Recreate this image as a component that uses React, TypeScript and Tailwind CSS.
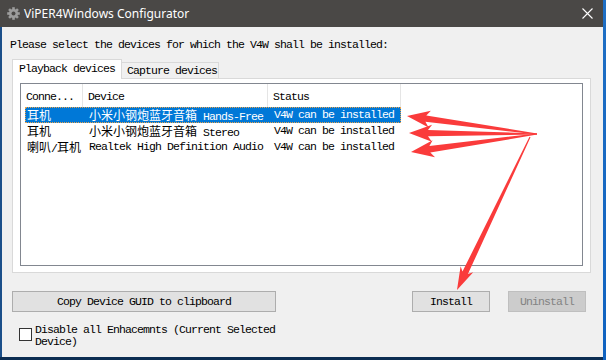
import React from "react";

const mono =
  "font-['Liberation_Mono','Noto_Sans_CJK_SC',monospace] text-[11.5px] tracking-[-0.9px] text-black";
const cjk = "font-['Noto_Sans_CJK_SC',sans-serif] text-[12px] tracking-normal";

type Pt = [number, number];

function arrowPoints(S: Pt, T: Pt, headLen = 19, headHalf = 8.5, shaftHalf = 3.2): string {
  const dx = T[0] - S[0];
  const dy = T[1] - S[1];
  const L = Math.hypot(dx, dy);
  const d: Pt = [dx / L, dy / L];
  const n: Pt = [-d[1], d[0]];
  const B: Pt = [T[0] - d[0] * headLen, T[1] - d[1] * headLen];
  const p = (base: Pt, nn: number, dd: number): Pt => [
    base[0] + n[0] * nn + d[0] * dd,
    base[1] + n[1] * nn + d[1] * dd,
  ];
  const pts: Pt[] = [
    p(S, 0.6, 0),
    p(B, shaftHalf, 0),
    p(B, headHalf, -4),
    T,
    p(B, -headHalf, -4),
    p(B, -shaftHalf, 0),
    p(S, -0.6, 0),
  ];
  return pts.map((q) => `${q[0].toFixed(1)},${q[1].toFixed(1)}`).join(" ");
}

function Gear() {
  const teeth = Array.from({ length: 8 }, (_, i) => i * 45);
  return (
    <svg width="13" height="13" viewBox="0 0 13 13" className="shrink-0">
      <g transform="translate(6.5 6.5)">
        {teeth.map((a) => (
          <rect key={a} x={-1.3} y={-6.3} width={2.6} height={3} fill="#9c9c9c" transform={`rotate(${a})`} />
        ))}
        <circle r={4.6} fill="#9c9c9c" />
        <circle r={2} fill="#4a4846" />
      </g>
    </svg>
  );
}

const rows = [
  { c1: ["耳机"], c2: ["小米小钢炮蓝牙音箱", " Hands-Free"], sel: true },
  { c1: ["耳机"], c2: ["小米小钢炮蓝牙音箱", " Stereo"], sel: false },
  { c1: ["喇叭", "/", "耳机"], c2: ["", "Realtek High Definition Audio"], sel: false },
];

function Cell({ parts }: { parts: string[] }) {
  return (
    <>
      {parts.map((t, i) =>
        /[\u4e00-\u9fff]/.test(t) ? (
          <span key={i} className={cjk}>
            {t}
          </span>
        ) : (
          <span key={i} className="whitespace-pre">
            {t}
          </span>
        )
      )}
    </>
  );
}

export default function App() {
  return (
    <div className="relative w-[606px] h-[360px] bg-[#0c2d52] overflow-hidden">
      <div className="flex">
        {/* window */}
        <div className="w-[603px] h-[357px] flex flex-col">
          {/* title bar */}
          <div className="h-[27px] bg-[#4a4846] flex items-center pl-[7px] pr-[10px]">
            <Gear />
            <span className="ml-[4px] text-white text-[12px] font-['Noto_Sans',sans-serif] leading-none">
              ViPER4Windows Configurator
            </span>
            <svg width="11" height="11" viewBox="0 0 11 11" className="ml-auto">
              <path d="M0.5 0.5 L10.5 10.5 M10.5 0.5 L0.5 10.5" stroke="#ffffff" strokeWidth="1.1" />
            </svg>
          </div>
          {/* body */}
          <div className={`flex-1 bg-[#f0f0f0] border-l-2 border-[#1b4f8a] flex flex-col ${mono}`}>
            <div className="mt-[12px] pl-[8px] leading-[12px] whitespace-pre">
              Please select the devices for which the V4W shall be installed:
            </div>
            {/* tabs */}
            <div className="mt-[8px] ml-[10px] mr-[12px] flex flex-col">
              <div className="flex items-end h-[19px]">
                <div className="relative z-10 -mb-px h-[20px] w-[110px] bg-white border border-b-0 border-[#d9d9d9] pl-[6px] leading-[17px] whitespace-pre">
                  Playback devices
                </div>
                <div className="h-[16px] w-[97px] bg-[#f0f0f0] border border-l-0 border-b-0 border-[#d9d9d9] pl-[5px] leading-[16px] whitespace-pre">
                  Capture devices
                </div>
              </div>
              <div className="h-[195px] bg-white border border-[#d9d9d9] flex flex-col">
                <div className="mt-[4px] mx-[7px] h-[183px] border border-[#828790] bg-white flex flex-col">
                  {/* header */}
                  <div className="flex h-[23px]">
                    <div className="w-[62px] border-r border-[#e5e5e5] pl-[5px] pt-[5px] leading-[16px] whitespace-pre">
                      Conne...
                    </div>
                    <div className="w-[185px] border-r border-[#e5e5e5] pl-[5px] pt-[5px] leading-[16px]">
                      Device
                    </div>
                    <div className="w-[133px] border-r border-[#e5e5e5] pl-[5px] pt-[5px] leading-[16px]">
                      Status
                    </div>
                  </div>
                  {/* rows */}
                  {rows.map((r, i) => (
                    <div
                      key={i}
                      className={`ml-[4px] w-[376px] h-[16px] flex leading-[16px] ${
                        r.sel
                          ? "bg-[#0078d7] text-white outline-1 outline-dotted outline-[#e9a34c] -outline-offset-1"
                          : ""
                      }`}
                    >
                      <div className="w-[58px] pl-[2px] whitespace-pre">
                        <Cell parts={r.c1} />
                      </div>
                      <div className="w-[185px] pl-[6px] whitespace-pre">
                        <Cell parts={r.c2} />
                      </div>
                      <div className="w-[133px] pl-[6px] whitespace-pre">V4W can be installed</div>
                    </div>
                  ))}
                </div>
              </div>
            </div>
            {/* buttons */}
            <div className="mt-[18px] ml-[10px] mr-[17px] flex">
              <div className="w-[264px] h-[21px] bg-[#e1e1e1] border border-[#adadad] flex items-center justify-center whitespace-pre">
                Copy Device GUID to clipboard
              </div>
              <div className="ml-auto w-[78px] h-[21px] bg-[#e1e1e1] border border-[#adadad] flex items-center justify-center">
                Install
              </div>
              <div className="ml-[18px] w-[78px] h-[21px] bg-[#cccccc] border border-[#bfbfbf] text-[#838383] flex items-center justify-center">
                Uninstall
              </div>
            </div>
            {/* checkbox */}
            <div className="mt-[12px] ml-[17px] flex items-start">
              <div className="mt-[4px] w-[13px] h-[13px] border border-[#333333] bg-white shrink-0" />
              <div className="ml-[3px] leading-[12px] whitespace-pre">
                Disable all Enhacemnts (Current Selected
                <br />
                Device)
              </div>
            </div>
          </div>
        </div>
        {/* desktop strip right */}
        <div className="w-[3px] h-[360px] bg-gradient-to-b from-[#1f6fc4] to-[#0f62c0]" />
      </div>

      {/* annotation arrows */}
      <svg className="absolute inset-0 pointer-events-none" width="606" height="360" viewBox="0 0 606 360">
        <polygon points={arrowPoints([537, 134], [407, 116])} fill="#fa3b3b" />
        <polygon points={arrowPoints([537, 134], [409, 133])} fill="#fa3b3b" />
        <polygon points={arrowPoints([537, 134], [411, 152])} fill="#fa3b3b" />
        <polygon points={arrowPoints([530, 137], [457, 290], 19, 7, 3)} fill="#fa3b3b" />
      </svg>
    </div>
  );
}
